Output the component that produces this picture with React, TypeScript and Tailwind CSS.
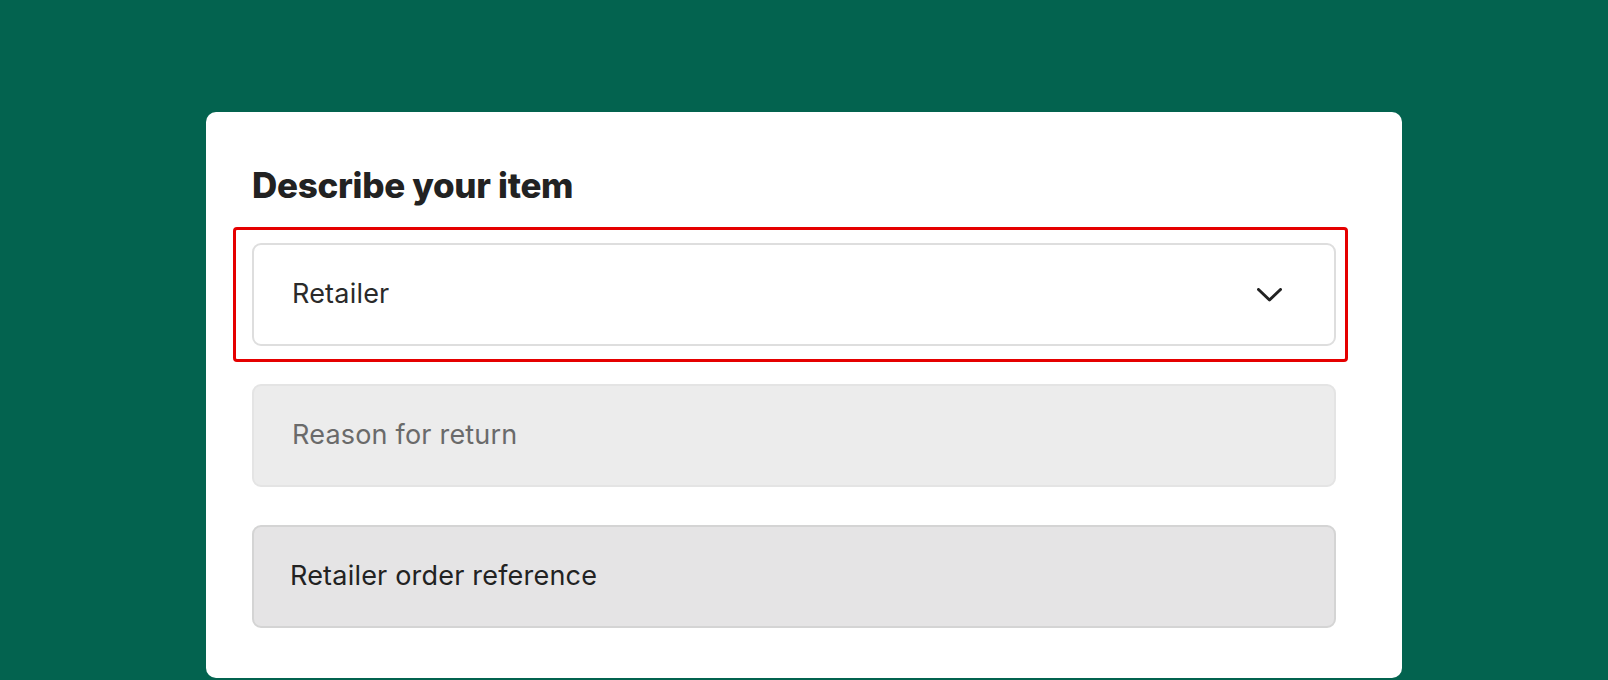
import React from 'react';

const font = { fontFamily: 'Inter, "Noto Sans", sans-serif' };

const Chevron = () => (
    <svg width="25" height="14" viewBox="0 0 25 14" fill="none" className="shrink-0">
        <path d="M1.5 1.5 L12.5 12 L23.5 1.5" stroke="#222222" strokeWidth="3" strokeLinecap="round" strokeLinejoin="round" />
    </svg>
);

export default function App() {
    return (
        <div className="w-full h-[680px] overflow-hidden bg-[#03634f] pt-[112px]" style={font}>
            <div className="mx-auto w-[1196px] bg-white rounded-[10px] pl-[46px] pr-[66px] pt-[51px] pb-[50px]">
                <h2 className="text-[35px] leading-[44px] font-extrabold text-[#222222] tracking-[-0.3px] mb-[36px]">
                    Describe your item
                </h2>

                {/* Retailer select, highlighted */}
                <div className="relative">
                    <div className="absolute -left-[19px] -right-[12px] -top-[16px] -bottom-[16px] border-[3px] border-[#e50000] rounded-[4px] pointer-events-none" />
                    <div className="h-[103px] flex items-center justify-between border-2 border-[#dedede] rounded-[9px] bg-white pl-[38px] pr-[52px]">
                        <span className="text-[27px] tracking-[0.2px] text-[#2a2a2a]">Retailer</span>
                        <Chevron />
                    </div>
                </div>

                <div className="mt-[38px] h-[103px] flex items-center border-2 border-[#e4e4e4] rounded-[9px] bg-[#ececec] pl-[38px]">
                    <span className="text-[27px] tracking-[0.2px] text-[#6a6a6a]">Reason for return</span>
                </div>

                <div className="mt-[38px] h-[103px] flex items-center border-2 border-[#d4d4d4] rounded-[9px] bg-[#e5e4e5] pl-[36px]">
                    <span className="text-[27px] tracking-[0.2px] text-[#222222]">Retailer order reference</span>
                </div>
            </div>
        </div>
    );
}
